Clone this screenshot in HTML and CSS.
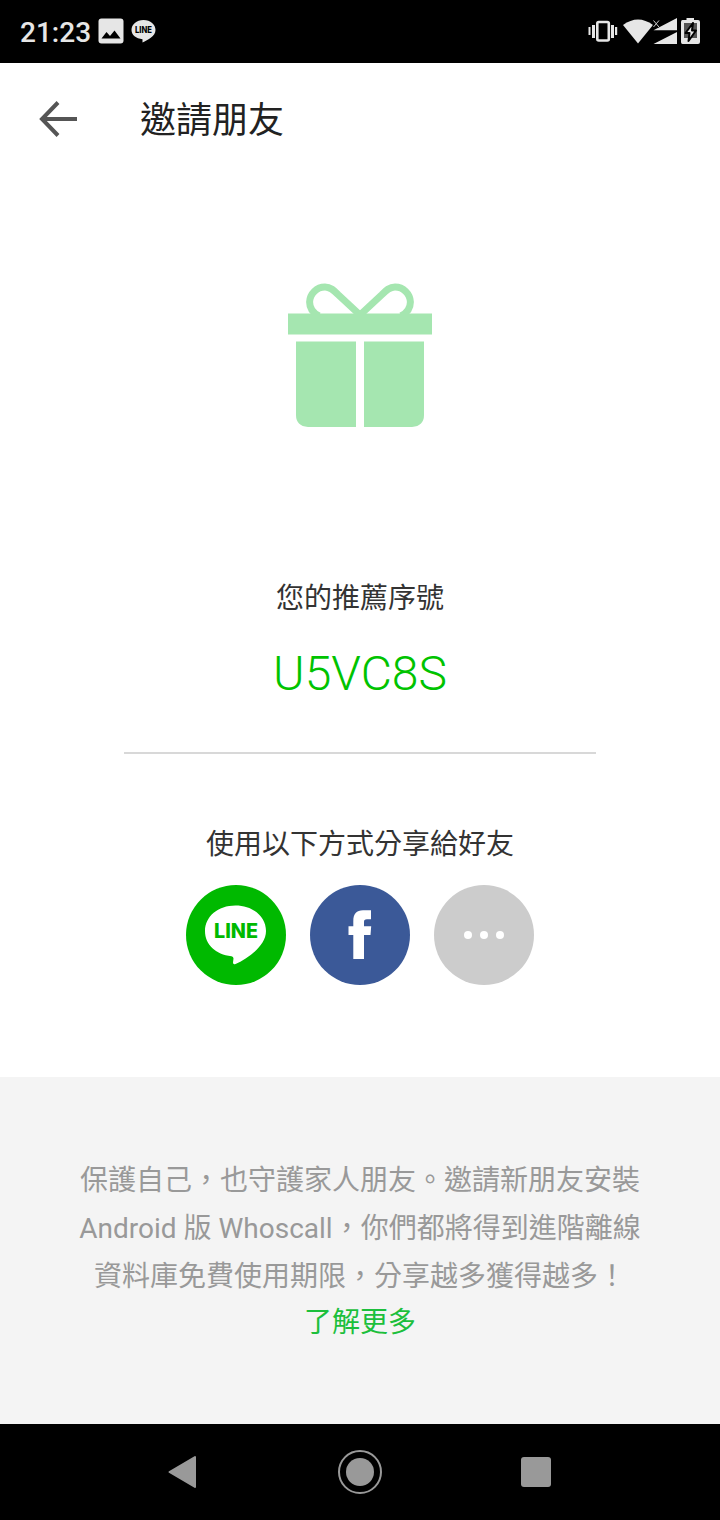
FILE: index.html
```html
<!DOCTYPE html>
<html lang="zh-Hant">
    <head>
        <meta charset="utf-8">
        <title>邀請朋友</title>
        <link rel="stylesheet" href="styles.css">
    </head>

    <body>
        <div class="statusbar">
            <span class="clock">21:23</span>
            <svg class="picture" width="26" height="26" viewBox="0 0 26 26">
                <rect x="0.5" y="0.5" width="25" height="25" rx="3" fill="#e6e6e6"/>
                <path d="M3.5 20.5L8.5 14L12 18L16.5 12.5L22.5 20.5Z" fill="#000"/>
            </svg>
            <svg class="line-small" width="25" height="25" viewBox="0 0 25 25">
                <path d="M12.5 1C5.500 1 .5 5.500 .5 11C.5 16 5 19.500 11.500 20.300V23.500C17 21 24.500 17 24.500 11C24.500 5.500 19.500 1 12.500 1Z" fill="#e6e6e6"/>
                <text class="logo-text" x="4" y="14" font-size="8.500" textLength="17" lengthAdjust="spacingAndGlyphs" fill="#000">LINE</text>
            </svg>
            <svg class="system" width="116" height="28" viewBox="0 0 116 28">
                <!-- vibrate -->
                <g fill="#e6e6e6">
                    <rect x="4.500" y="9" width="2" height="8"/>
                    <rect x="8" y="7" width="3" height="13"/>
                    <rect x="27" y="7" width="3" height="13"/>
                    <rect x="31" y="9" width="2.200" height="8"/>
                </g>
                <rect x="13.300" y="4" width="11.500" height="18.500" rx="1.500" fill="none" stroke="#e6e6e6" stroke-width="2.600"/>
                <!-- wifi -->
                <path d="M39 7Q54 -4 69 7L54 25.500Z" fill="#e6e6e6"/>
                <!-- signal -->
                <path d="M69.500 12.200L93 0V12.200ZM69.500 26L93 14V26Z" fill="#e6e6e6"/>
                <path d="M69.500 2.500L75 9M75 2.500L69.500 9" stroke="#000" stroke-width="3"/>
                <path d="M69.500 2.500L75 9M75 2.500L69.500 9" stroke="#ccc" stroke-width="1"/>
                <!-- battery -->
                <path d="M98.500 2H102.500V0H110V2H114Q116 2 116 4V24Q116 26 114 26H98.500Q97 26 97 24V4Q97 2 98.500 2Z" fill="#e6e6e6"/>
                <rect x="100" y="5" width="13" height="15" fill="#555"/>
                <path d="M109 5L101.500 15H105.500L104.500 23L112 12.500H108Z" fill="#e6e6e6" stroke="#000" stroke-width="2" stroke-linejoin="round"/>
            </svg>
        </div>

        <div class="toolbar">
            <svg width="40" height="40" viewBox="0 0 40 40">
                <path d="M39 20H5M20 3.500L4 20L20 36.500" fill="none" stroke="#555" stroke-width="4"/>
            </svg>
            <h1>邀請朋友</h1>
        </div>

        <div class="content">
            <svg class="gift" width="144" height="146" viewBox="0 0 144 146" fill="#a5e6b0">
                <path d="M72 33L50 12.500C46 8.500 42.500 5 37 5A15.500 15.500 0 0 0 21.600 20C21.600 26 25 31 31 34M72 33L94 12.500C98 8.500 101.500 5 107 5A15.500 15.500 0 0 1 122.400 20C122.400 26 119 31 113 34" fill="none" stroke="#a5e6b0" stroke-width="7"/>
                <rect y="31.500" width="144" height="21"/>
                <path d="M8 59.500H68V145H20Q8 144 8 133ZM76 59.500H136V133Q136 144 124 145H76Z"/>
            </svg>
            <div class="label">您的推薦序號</div>
            <div class="code">U5VC8S</div>
            <div class="label share-label">使用以下方式分享給好友</div>
            <div class="share">
                <svg width="100" height="100" viewBox="0 0 100 100">
                    <circle cx="50" cy="50" r="50" fill="#00b900"/>
                    <path d="M49.500 20.500C32 20.500 19 31.500 19 46C19 59.500 29.500 69.500 45.500 71.200Q47.500 71.500 47.500 73.500L47 77.500Q47 80 49.500 79C61 73.500 80 61.500 80 46C80 31.500 67 20.500 49.500 20.500Z" fill="#fff"/>
                    <text class="logo-text" x="28" y="53.300" font-size="19.500" textLength="44" lengthAdjust="spacingAndGlyphs" fill="#00b900">LINE</text>
                </svg>
                <svg width="100" height="100" viewBox="0 0 100 100">
                    <circle cx="50" cy="50" r="50" fill="#3b5998"/>
                    <path d="M43.300 74V50H38.500V41.300H43.300V36C43.300 29 46.500 25.300 53 25.300H61V34.200H57C54.700 34.200 54 35 54 37V41.300H61.200L60.500 50H54V74Z" fill="#fff"/>
                </svg>
                <svg width="100" height="100" viewBox="0 0 100 100">
                    <circle cx="50" cy="50" r="50" fill="#ccc"/>
                    <g fill="#fff">
                        <circle cx="34" cy="50" r="4"/>
                        <circle cx="50" cy="50" r="4"/>
                        <circle cx="66" cy="50" r="4"/>
                    </g>
                </svg>
            </div>
        </div>

        <div class="info">
            <p>保護自己，也守護家人朋友。邀請新朋友安裝<br>Android 版 Whoscall，你們都將得到進階離線<br>資料庫免費使用期限，分享越多獲得越多！</p>
            <a class="more">了解更多</a>
        </div>

        <div class="navbar">
            <svg width="30" height="34" viewBox="0 0 30 34">
                <path d="M1.500 17L27 2V32Z" fill="#999" stroke="#999" stroke-width="2" stroke-linejoin="round"/>
            </svg>
            <svg class="home" width="46" height="46" viewBox="0 0 46 46">
                <circle cx="23" cy="23" r="21" fill="none" stroke="#999" stroke-width="2"/>
                <circle cx="23" cy="23" r="14" fill="#999"/>
            </svg>
            <svg width="30" height="30" viewBox="0 0 30 30">
                <rect width="30" height="30" rx="3" fill="#999"/>
            </svg>
        </div>
    </body>
</html>
```
FILE: styles.css
```css
body {
    margin: 0;
    height: 1520px;
    display: flex;
    flex-direction: column;
    background-color: #fff;
    font-family: Roboto, "Noto Sans CJK TC", sans-serif;
    overflow: hidden;
}
svg {
    display: block;
    flex: none;
}
.statusbar {
    box-sizing: border-box;
    height: 63px;
    padding: 0 20px;
    display: flex;
    align-items: center;
    background-color: #000;
}
.clock {
    width: 78px;
    color: #e6e6e6;
    font-size: 28px;
    font-weight: 500;
    line-height: 32px;
    padding-top: 2px;
}
.picture {
    margin-bottom: 1px;
}
.line-small {
    margin-left: 7px;
}
.system {
    margin-left: auto;
    margin-top: 1px;
}
.logo-text {
    font-family: Inter, sans-serif;
    font-weight: 800;
}
.toolbar {
    height: 112px;
    padding-left: 38px;
    display: flex;
    align-items: center;
}
.toolbar h1 {
    margin: 0 0 0 62px;
    padding-top: 4px;
    color: #222;
    font-size: 36px;
    font-weight: 400;
    line-height: 52px;
}
.content {
    height: 902px;
    display: flex;
    flex-direction: column;
    align-items: center;
}
.gift {
    margin-top: 107px;
}
.label {
    margin-top: 151px;
    color: #333;
    font-size: 28px;
    line-height: 40px;
}
.code {
    box-sizing: border-box;
    width: 472px;
    height: 135px;
    padding-top: 27px;
    border-bottom: 2px solid #d8d8d8;
    color: #00c300;
    font-size: 48px;
    font-weight: 300;
    line-height: 56px;
    text-align: center;
}
.share-label {
    margin-top: 71px;
}
.share {
    display: flex;
    gap: 24px;
    margin-top: 20px;
}
.info {
    box-sizing: border-box;
    height: 347px;
    padding-top: 80px;
    background-color: #f4f4f4;
    font-size: 28px;
    text-align: center;
}
.info p {
    margin: 0;
    color: #999;
    line-height: 48px;
}
.more {
    display: block;
    color: #1cbf3c;
    line-height: 44px;
}
.navbar {
    box-sizing: border-box;
    height: 96px;
    padding: 0 169px 0 168px;
    display: flex;
    align-items: center;
    justify-content: space-between;
    background-color: #000;
}
.home {
    margin-left: 1px;
}
```
